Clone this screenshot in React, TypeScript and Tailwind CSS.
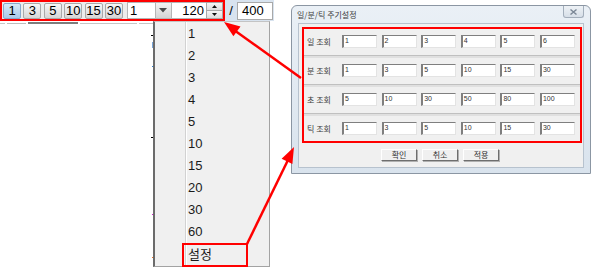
import React from "react";

const PERIODS = ["1", "3", "5", "10", "15", "30"];
const ITEMS = ["1", "2", "3", "4", "5", "10", "15", "20", "30", "60", "설정"];
const ROWS = [
  { label: "일 조회", values: ["1", "2", "3", "4", "5", "6"] },
  { label: "분 조회", values: ["1", "3", "5", "10", "15", "30"] },
  { label: "초 조회", values: ["5", "10", "30", "50", "80", "100"] },
  { label: "틱 조회", values: ["1", "3", "5", "10", "15", "30"] },
];

const LATIN = "font-['Liberation_Sans','Noto_Sans_CJK_KR',sans-serif]";
const KR = "font-['Noto_Sans_CJK_KR','Liberation_Sans',sans-serif]";

// ── toolbar ──
function PeriodButton({ label, active }: { label: string; active?: boolean }) {
  return (
    <div
      className={`flex h-[16px] w-[18px] items-center justify-center rounded-[2px] border text-[13px] leading-none text-black ${
        active
          ? "border-[#86a9cc] bg-gradient-to-b from-[#d6e8f8] to-[#a9cbea]"
          : "border-[#a9a9a9] bg-gradient-to-b from-[#f7f7f7] to-[#d6d6d6]"
      }`}
    >
      {label}
    </div>
  );
}

function Toolbar() {
  return (
    <div className={`flex h-[21px] items-stretch ${LATIN}`}>
      <div className="flex w-[225px] items-center border-2 border-[#ff0000] bg-[#ececec] pl-px">
        <div className="flex gap-[2.4px]">
          {PERIODS.map((p, i) => (
            <PeriodButton key={p} label={p} active={i === 0} />
          ))}
        </div>
        {/* combo */}
        <div className="ml-[4px] flex h-[17px] w-[28px] items-center border border-r-0 border-[#b5b5b5] bg-white pl-[2px] text-[13px] text-black">
          1
        </div>
        <div className="flex h-[17px] w-[17px] items-center justify-center border border-[#b5b5b5] bg-gradient-to-b from-[#f3f3f3] to-[#d4d4d4]">
          <svg width="8" height="5" viewBox="0 0 8 5">
            <polygon points="0,0 8,0 4,4.5" fill="#4a4a4a" />
          </svg>
        </div>
        {/* spin edit */}
        <div className="flex h-[17px] w-[34px] items-center justify-end border-y border-[#b5b5b5] bg-white pr-[2px] text-[13px] text-black">
          120
        </div>
        <div className="flex h-[17px] flex-1 flex-col">
          <div className="flex flex-1 items-center justify-center border border-[#a8a8a8] bg-gradient-to-b from-[#f5f5f5] to-[#dcdcdc]">
            <svg width="5" height="3" viewBox="0 0 5 3">
              <polygon points="2.5,0 5,3 0,3" fill="#111" />
            </svg>
          </div>
          <div className="flex flex-1 items-center justify-center border border-t-0 border-[#a8a8a8] bg-gradient-to-b from-[#f5f5f5] to-[#dcdcdc]">
            <svg width="5" height="3" viewBox="0 0 5 3">
              <polygon points="0,0 5,0 2.5,3" fill="#111" />
            </svg>
          </div>
        </div>
      </div>
      <div className="flex w-[12px] items-center justify-center bg-[#d8e3ef] text-[13px] text-black">/</div>
      <div className="flex items-center bg-[#d8e3ef] pr-px">
        <div className="flex h-[18px] w-[36px] items-center border border-[#a9a9a9] bg-white pl-[4px] text-[13px] text-black">
          400
        </div>
      </div>
    </div>
  );
}

function TabStrip() {
  return (
    <div className="flex h-[3px] items-end gap-[2px]">
      <div className="h-px w-[5px] bg-[#c8c8c8]" />
      <div className="h-px w-[19px] bg-[#bdbdbd]" />
      <div className="h-[2px] w-[50px] bg-[#7d7d7d]" />
      <div className="h-px w-[57px] bg-[#c6c6c6]" />
      <div className="h-px w-[14px] bg-[#c6c6c6]" />
    </div>
  );
}

// ── dropdown menu ──
function Dropdown() {
  return (
    <div className={`absolute left-[153px] top-[21px] flex h-[246px] w-[117px] border-l-2 border-r border-b border-t border-l-[#6b6b6b] border-r-[#a3a3a3] border-b-[#a3a3a3] border-t-[#c4c4c4] bg-[#f0f0f0] ${LATIN}`}>
      <div className="w-[30px]" />
      <div className="w-[2px] border-l border-r border-l-[#d2d2d2] border-r-white" />
      <div className="flex flex-col pl-[1px] pt-px">
        {ITEMS.map((it) => (
          <div
            key={it}
            className={`h-[22px] text-[13px] leading-[22px] text-[#1b1b1b] ${it === "설정" ? `${KR} text-[12px]` : ""}`}
          >
            {it}
          </div>
        ))}
      </div>
    </div>
  );
}

// ── dialog ──
function Field({ value }: { value: string }) {
  return (
    <div className={`flex h-[13px] w-[35px] items-start border border-l-2 border-t-[#7f7f7f] border-l-[#7f7f7f] border-r-[#e3e3e3] border-b-[#e3e3e3] bg-white pl-[1px] pt-[1px] text-[7px] leading-[8px] text-[#333] ${LATIN}`}>
      {value}
    </div>
  );
}

function DlgButton({ label }: { label: string }) {
  return (
    <div className="flex h-[12px] w-[36px] items-center justify-center border border-t-white border-l-white border-r-[#6e6e6e] border-b-[#6e6e6e] bg-[#f0f0f0] text-[8px] leading-none text-[#333] shadow-[1px_1px_0_#b0b0b0]">
      {label}
    </div>
  );
}

function Dialog() {
  return (
    <div className={`absolute left-[291px] top-[5px] flex h-[169px] w-[300px] flex-col rounded-t-[6px] border border-[#8b96a3] bg-gradient-to-b from-[#eaf0f6] to-[#d9e3ed] ${KR}`}>
      <div className="flex h-[17px] items-start justify-between">
        <div className="pl-[5px] pt-[4px] text-[8px] leading-[9px] text-[#3a3a3a]">일/분/틱 주기설정</div>
        <div className="mr-[6px] flex h-[12px] w-[21px] items-center justify-center rounded-b-[3px] border border-t-0 border-[#a3aebb] bg-gradient-to-b from-[#eef2f6] to-[#d7dfe8]">
          <svg width="7" height="6" viewBox="0 0 7 6">
            <path d="M0.5 0.5 L6.5 5.5 M6.5 0.5 L0.5 5.5" stroke="#7b8796" strokeWidth="1.4" fill="none" />
          </svg>
        </div>
      </div>
      <div className="mx-[6px] flex h-[145px] flex-col border border-[#b7c2ce] bg-[#f0f0f0] pl-[3px] pr-px pt-[3px]">
        <div className="flex h-[116px] flex-col border-2 border-[#ff0000]">
          {ROWS.map((row, i) => (
            <React.Fragment key={row.label}>
              <div className={`flex items-start pl-[3px] pt-[6px] ${i === 3 ? "h-[23px]" : "h-[26px]"}`}>
                <div className="flex h-[13px] w-[35px] items-center text-[8px] leading-none text-[#3a3a3a]">{row.label}</div>
                <div className="flex gap-[4.6px]">
                  {row.values.map((v, j) => (
                    <Field key={j} value={v} />
                  ))}
                </div>
              </div>
              {i < 3 && <div className="h-[3px] border-t border-[#c0c0c0] bg-[#e0e0e0]" />}
            </React.Fragment>
          ))}
        </div>
        <div className="mt-[6px] flex justify-center gap-[5px] pr-[4px]">
          <DlgButton label="확인" />
          <DlgButton label="취소" />
          <DlgButton label="적용" />
        </div>
      </div>
    </div>
  );
}

// ── annotation arrows ──
function Arrows() {
  return (
    <svg className="pointer-events-none absolute left-0 top-0" width="600" height="269" viewBox="0 0 600 269">
      <line x1="301" y1="78" x2="234" y2="30" stroke="#ff0000" strokeWidth="2.5" />
      <polygon points="224,22 240.5,26.5 233.4,36.2" fill="#ff0000" />
      <line x1="247" y1="244" x2="288" y2="160" stroke="#ff0000" strokeWidth="2.5" />
      <polygon points="294,147 292.4,164 281.6,158.8" fill="#ff0000" />
    </svg>
  );
}

export default function App() {
  return (
    <div className="relative h-[269px] w-[600px] overflow-hidden bg-white">
      <Toolbar />
      <TabStrip />

      {/* chart bits peeking out beside the menu */}
      <div className="absolute left-[151px] top-[35px] h-px w-[2px] bg-black" />
      <div className="absolute left-[152px] top-[42px] h-[6px] w-px bg-[#7aa6d8]" />
      <div className="absolute left-[152px] top-[66px] h-px w-px bg-[#2f7fd0]" />
      <div className="absolute left-[151px] top-[137px] h-px w-[2px] bg-black" />
      <div className="absolute left-[152px] top-[214px] h-px w-px bg-[#d020d0]" />
      <div className="absolute left-[152px] top-[257px] h-px w-px bg-[#f07020]" />

      <Dropdown />
      <div className="absolute left-[182px] top-[243px] h-[24px] w-[66px] border-2 border-[#ff0000]" />
      <Dialog />
      <Arrows />
    </div>
  );
}
